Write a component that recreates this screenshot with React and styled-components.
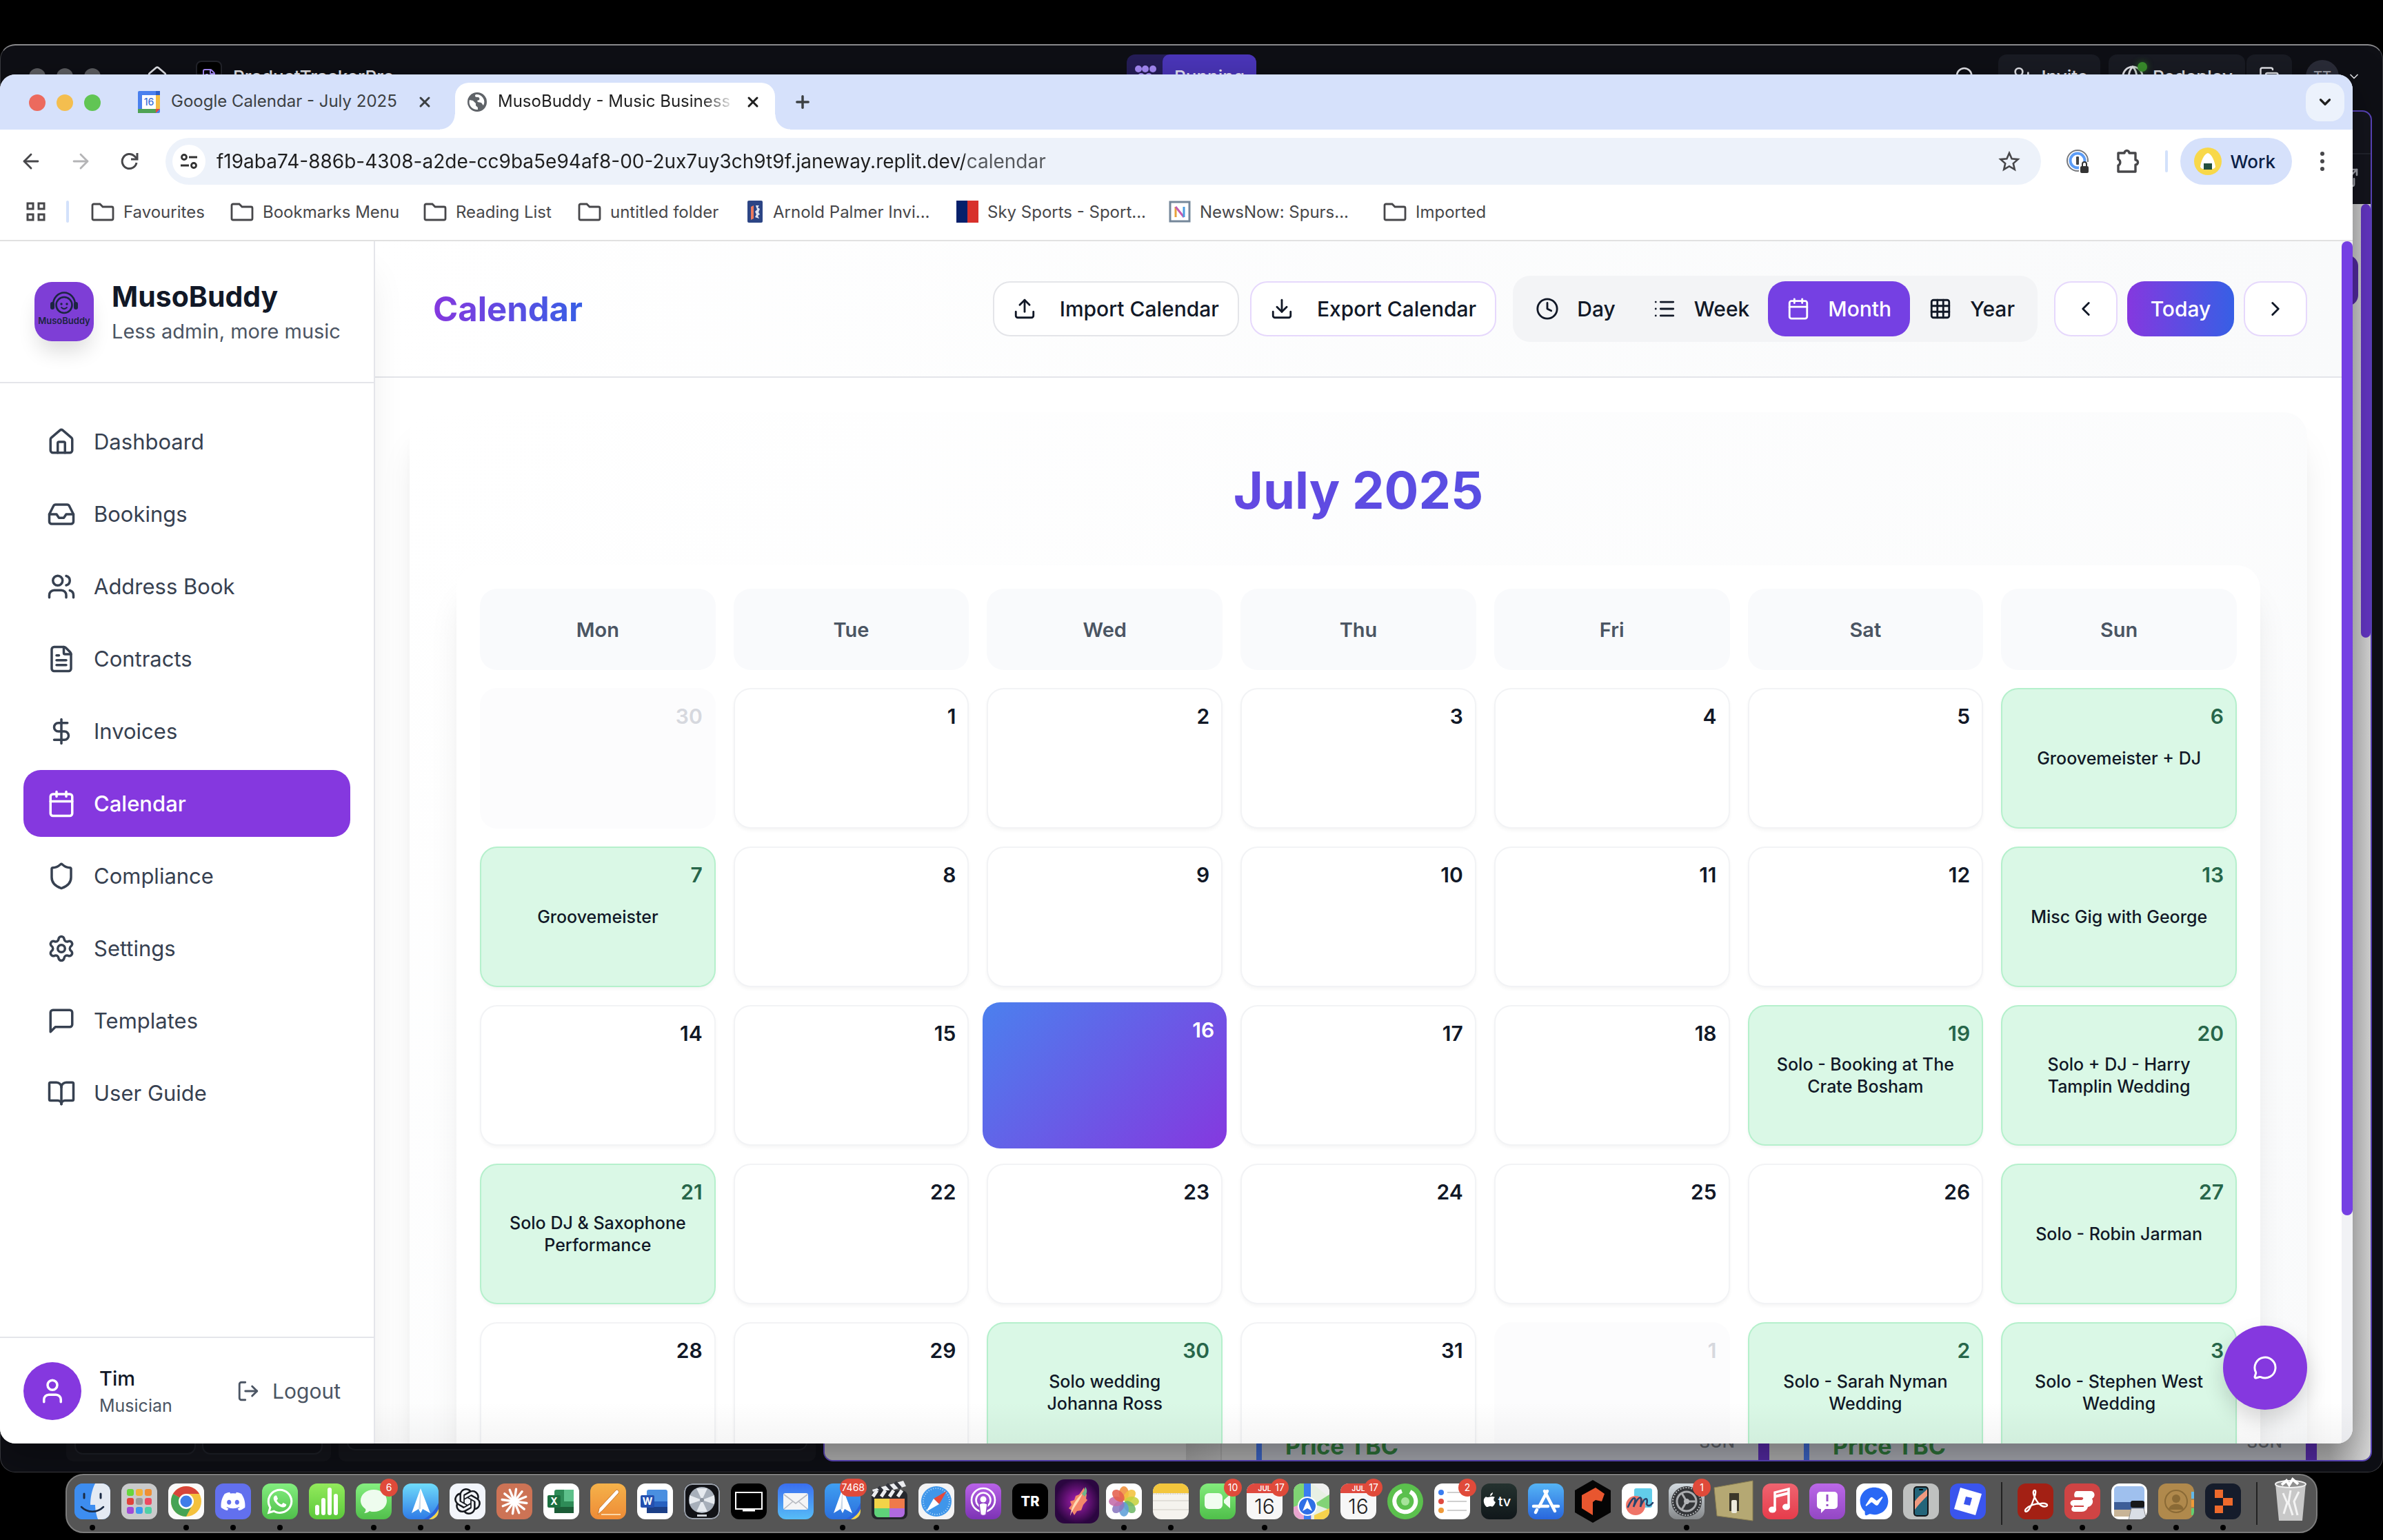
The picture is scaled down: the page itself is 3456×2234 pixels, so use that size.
import React from "react";
import styled, { createGlobalStyle, css } from "styled-components";
import {
  House, Inbox, Users, FileText, DollarSign, Calendar, Shield, Settings, BookOpen,
  Upload, Download, Clock, List, Grid3x3, ChevronLeft, ChevronRight, ChevronDown,
  User, LogOut, X, Plus, ArrowLeft, ArrowRight, Search, UserPlus, Globe, MessageCircle,
  ExternalLink, Copy,
} from "lucide-react";
import { FaDiscord, FaWhatsapp, FaFacebookMessenger } from "react-icons/fa";
import { SiOpenai } from "react-icons/si";

const violet = "#8538df";
const indigo = "#7540e3";

const GlobalStyle = createGlobalStyle`
  * { box-sizing: border-box; }
  body { margin: 0; background: #000; font-family: Inter, "Liberation Sans", sans-serif; color: #111827; }
  button, input { font: inherit; color: inherit; }
  button { border: 0; background: none; padding: 0; }
  a { color: inherit; text-decoration: none; }
  svg { display: block; flex: none; }
`;

const Desktop = styled.div`
  position: relative;
  min-height: 100vh;
  overflow: hidden;
`;

/* ---------- editor window behind the browser ---------- */

const EditorWindow = styled.div`
  position: absolute;
  inset: 64px 0 98px 0;
  display: flex;
  flex-direction: column;
  background: #0e0f15;
  border: 1px solid #3a3b40;
  border-top: 2px solid #8a8a8d;
  border-radius: 22px;
  overflow: hidden;
`;
const EditorBar = styled.div`
  height: 94px;
  display: grid;
  grid-template-columns: 1fr auto 1fr;
  align-items: center;
  padding: 0 31px 4px;
  color: #e4e5ea;
  font-size: 26px;
  font-weight: 500;
`;
const BarGroup = styled.div`
  display: flex;
  align-items: center;
  gap: 16px;
  padding-left: 10px;
`;
const BarActions = styled.div`
  display: flex;
  align-items: center;
  justify-content: flex-end;
  gap: 12px;
`;
const Light = styled.span`
  width: 24px;
  height: 24px;
  border-radius: 50%;
  background: ${(p) => p.$color};
`;
const AppGlyph = styled.span`
  display: grid;
  place-items: center;
  width: 38px;
  height: 46px;
  border-radius: 8px;
  background: #000;
  border: 2px solid #23242c;
  color: #a78bfa;
`;
const HomeSlot = styled.span`
  padding: 0 24px 0 50px;
`;
const RunPill = styled.button`
  display: flex;
  align-items: center;
  height: 64px;
  border-radius: 12px;
  overflow: hidden;
  background: #251d58;
  color: #a78bfa;
  gap: 8px;
  padding-left: 12px;
  span { display: grid; place-items: center; height: 64px; width: 136px; border-radius: 10px 0 0 10px; background: #4b36bb; color: #e8e6f7; }
`;
const BarButton = styled.button`
  display: flex;
  align-items: center;
  gap: 12px;
  height: 64px;
  padding: 0 18px;
  border-radius: 12px;
  background: #191b23;
`;
const SplitButton = styled.div`
  display: flex;
  gap: 2px;
  margin-right: 8px;
`;
const LiveGlobe = styled.span`
  position: relative;
  &::after {
    content: "";
    position: absolute;
    top: -4px;
    right: -4px;
    width: 14px;
    height: 14px;
    border-radius: 50%;
    background: #3a8f2c;
    box-shadow: 0 0 10px #2f6d26;
  }
`;
const SearchSlot = styled.span`
  padding-right: 20px;
`;
const RoundAvatar = styled.span`
  display: grid;
  place-items: center;
  width: 48px;
  height: 48px;
  border-radius: 50%;
  background: #2a2c38;
  font-size: 20px;
  color: #9a9ca6;
`;
const EditorBody = styled.div`
  flex: 1;
  min-height: 0;
  display: flex;
  align-items: flex-end;
  gap: 11px;
  padding: 0 15px 15px 95px;
`;
const ToolPanel = styled.div`
  display: flex;
  flex: none;
  gap: 9px;
  width: ${(p) => p.$width}px;
  height: 300px;
  padding: 12px 12px ${(p) => p.$pad}px;
  border-radius: 10px;
  background: #14151b;
`;
const ToolSlot = styled.div`
  flex: 1;
  border: 2px solid #1e2027;
  border-radius: 12px;
  background: #0f1016;
`;
const WebPane = styled.div`
  flex: 1;
  align-self: stretch;
  display: flex;
  flex-direction: column;
  border: 2px solid #5b45bd;
  border-radius: 14px;
  overflow: hidden;
  background: #14151d;
`;
const WebTabs = styled.div`
  height: 62px;
  border-bottom: 2px solid #22242d;
`;
const WebBar = styled.div`
  display: flex;
  flex-direction: column;
  align-items: flex-end;
  height: 72px;
  padding: 18px 16px 0;
  gap: 4px;
  color: #a3a5ad;
`;
const WebPage = styled.div`
  flex: 1;
  min-height: 0;
  display: flex;
  background: linear-gradient(90deg, #adadad calc(100% - 60px), #dadada);
`;
const WebThumb = styled.div`
  width: 14px;
  height: 629px;
  border-radius: 8px;
  background: #6537c6;
`;
const WebCards = styled.div`
  position: relative;
  flex: 1;
  display: flex;
  align-items: flex-end;
  overflow: hidden;
`;
const WebAction = styled.span`
  position: absolute;
  right: 4px;
  top: 74px;
  width: 90px;
  height: 74px;
  border-radius: 16px;
  background: #52299f;
`;
const WebGap = styled.div`
  flex: none;
  width: 576px;
  height: 60px;
  border-right: 2px solid #9c9c9c;
  background: linear-gradient(90deg, #b0b0b0 524px, #9d9d9d 524px, #a9a9a9);
`;
const WebCard = styled.div`
  flex: none;
  display: flex;
  align-items: flex-start;
  width: 744px;
  height: 60px;
  margin-left: 50px;
  border-left: 8px solid #3a62c0;
  border-right: 16px solid #52299f;
  background: #a4a6ad;
  padding: 20px 34px 0;
  color: #2d7038;
`;
const WebPrice = styled.span`
  font-size: 34px;
  line-height: 40px;
  font-weight: 700;
`;
const WebWeekday = styled.span`
  margin-left: auto;
  color: #5c5f66;
  font-size: 24px;
  font-weight: 500;
  line-height: 28px;
`;

/* ---------- browser window ---------- */

const BrowserWindow = styled.div`
  position: absolute;
  inset: 108px 44px 140px 0;
  display: flex;
  flex-direction: column;
  background: #fff;
  border-radius: 22px;
  overflow: hidden;
  box-shadow: 0 16px 60px rgba(0, 0, 0, 0.35);
`;
const TabStrip = styled.div`
  display: flex;
  flex: none;
  height: 80px;
  padding: 12px 12px 0 42px;
  background: #d6e1fb;
  color: #3c4043;
  font-size: 24px;
`;
const Lights = styled.div`
  display: flex;
  gap: 16px;
  padding: 17px 36px 0 0;
`;
const Tab = styled.div`
  position: relative;
  display: flex;
  align-items: flex-start;
  width: 478px;
  padding: 12px 30px 0 18px;
  height: 68px;
  line-height: 30px;
  border-radius: 20px 20px 0 0;
  ${(p) => p.$active && css`
    width: 464px;
    padding: 12px 18px 0;
    background: #fff;
    color: #1f1f1f;
    &::before, &::after {
      content: "";
      position: absolute;
      bottom: 0;
      width: 22px;
      height: 22px;
    }
    &::before { left: -22px; background: radial-gradient(circle at 0 0, transparent 21px, #fff 22px); }
    &::after { right: -22px; background: radial-gradient(circle at 100% 0, transparent 21px, #fff 22px); }
  `}
`;
const TabText = styled.span`
  flex: 1;
  min-width: 0;
  margin: 0 12px 0 16px;
  white-space: nowrap;
  overflow: hidden;
  ${(p) => p.$fade && "mask-image: linear-gradient(90deg, #000 86%, transparent);"}
`;
const TabClose = styled.button`
  display: grid;
  place-items: center;
  width: 28px;
  height: 32px;
`;
const NewTab = styled.button`
  width: 80px;
  height: 60px;
  display: grid;
  place-items: center;
  align-items: start;
  padding-top: 14px;
`;
const TabSearch = styled.button`
  display: grid;
  place-items: center;
  width: 56px;
  height: 56px;
  margin-left: auto;
  border-radius: 20px;
  background: #ecf2fc;
  color: #1f1f1f;
`;
const Toolbar = styled.div`
  display: flex;
  flex: none;
  align-items: center;
  height: 92px;
  padding: 0 40px 0 28px;
  color: #47474a;
`;
const NavButton = styled.button`
  display: grid;
  place-items: center;
  width: 32px;
  margin-right: 40px;
  opacity: ${(p) => (p.$off ? 0.4 : 1)};
`;
const Omnibox = styled.label`
  flex: 1;
  display: flex;
  align-items: center;
  height: 68px;
  margin-left: -4px;
  padding: 0 30px 0 10px;
  border-radius: 34px;
  background: #edf2fa;
`;
const SiteInfo = styled.span`
  display: grid;
  place-items: center;
  width: 48px;
  height: 48px;
  margin-right: 16px;
  border-radius: 50%;
  background: #fff;
`;
const Address = styled.input`
  flex: 1;
  border: 0;
  padding: 0;
  outline: 0;
  font-size: 28px;
  color: transparent;
  background: linear-gradient(90deg, #1f1f1f 1085px, #55585c 1085px);
  -webkit-background-clip: text;
  background-clip: text;
`;
const Extensions = styled.div`
  display: flex;
  align-items: center;
  gap: 36px;
  padding-left: 36px;
`;
const Rule = styled.span`
  width: 4px;
  height: 32px;
  border-radius: 2px;
  background: #d3e1fb;
`;
const Profile = styled.button`
  display: flex;
  align-items: center;
  gap: 13px;
  height: 68px;
  margin: 0 4px 0 -18px;
  padding: 0 24px 0 20px;
  border-radius: 34px;
  background: #d6e1fb;
  color: #0b1e46;
  font-size: 26px;
  font-weight: 500;
`;
const Bookmarks = styled.nav`
  display: flex;
  flex: none;
  align-items: center;
  height: 70px;
  padding: 0 38px 14px;
  border-bottom: 2px solid #e1e1e1;
  color: #47474a;
  font-size: 24px;
`;
const Bookmark = styled.a`
  display: flex;
  align-items: center;
  gap: 13px;
  width: ${(p) => p.$width}px;
  white-space: nowrap;
`;
const AppsButton = styled.button`
  margin-right: 30px;
`;
const BookmarkRule = styled(Rule)`
  margin-right: 32px;
`;

/* ---------- page ---------- */

const Page = styled.div`
  flex: 1;
  min-height: 0;
  display: flex;
  position: relative;
  &::after {
    content: "";
    position: absolute;
    inset: auto 0 0 0;
    height: 60px;
    background: linear-gradient(transparent, rgba(0, 0, 0, 0.04));
    pointer-events: none;
  }
`;
const Sidebar = styled.aside`
  position: relative;
  z-index: 1;
  flex: none;
  display: flex;
  flex-direction: column;
  width: 544px;
  background: #fff;
  border-right: 2px solid #e4e5ea;
  box-shadow: 0 40px 52px -10px rgba(0, 0, 0, 0.09);
`;
const Brand = styled.div`
  display: flex;
  align-items: center;
  gap: 26px;
  height: 206px;
  padding: 0 50px;
  border-bottom: 2px solid #e4e5ea;
`;
const BrandMark = styled.div`
  border-radius: 25px;
  box-shadow: 0 20px 30px -6px rgba(0, 0, 0, 0.14);
`;
const BrandText = styled.div`
  padding-top: 4px;
`;
const BrandName = styled.div`
  font-size: 41px;
  line-height: 54px;
  font-weight: 700;
`;
const BrandTag = styled.div`
  font-size: 29px;
  line-height: 48px;
  color: #4b5563;
  white-space: nowrap;
`;
const Menu = styled.nav`
  flex: 1;
  display: flex;
  flex-direction: column;
  gap: 8px;
  padding: 36px 34px;
`;
const MenuItem = styled.a`
  display: flex;
  align-items: center;
  gap: 26px;
  height: 97px;
  padding: 0 34px;
  border-radius: 25px;
  font-size: 31px;
  font-weight: ${(p) => (p.$active ? 500 : 400)};
  color: ${(p) => (p.$active ? "#fff" : "#374151")};
  background: ${(p) => (p.$active ? violet : "transparent")};
`;
const Account = styled.div`
  display: flex;
  align-items: center;
  height: 155px;
  padding: 0 48px 0 34px;
  border-top: 2px solid #e4e5ea;
`;
const Avatar = styled.div`
  display: grid;
  place-items: center;
  width: 84px;
  height: 84px;
  margin-right: 26px;
  border-radius: 50%;
  background: ${violet};
  color: #fff;
`;
const AccountName = styled.div`
  font-size: 29px;
  line-height: 42px;
  font-weight: 500;
`;
const AccountRole = styled.div`
  font-size: 25px;
  line-height: 36px;
  color: #4b5563;
`;
const Logout = styled.button`
  display: flex;
  align-items: center;
  gap: 18px;
  margin-left: auto;
  font-size: 30px;
  color: #4b5563;
`;
const Main = styled.main`
  flex: 1;
  min-width: 0;
  overflow: hidden;
  background: #fff;
`;
const PageHeader = styled.header`
  display: flex;
  align-items: center;
  justify-content: space-between;
  height: 198px;
  padding: 0 50px 0 84px;
  border-bottom: 2px solid #e4e5ea;
  background: linear-gradient(90deg, #fff, #f9fafb);
`;
const PageTitle = styled.h1`
  margin: 0;
  font-size: 49px;
  font-weight: 700;
  color: transparent;
  background: linear-gradient(90deg, ${violet}, #375fe5);
  -webkit-background-clip: text;
  background-clip: text;
`;
const Actions = styled.div`
  display: flex;
  align-items: center;
  gap: ${(p) => p.$gap}px;
  font-size: 30px;
  font-weight: 500;
`;
const Outline = styled.button`
  display: flex;
  align-items: center;
  justify-content: center;
  gap: 34px;
  height: 80px;
  min-width: 91px;
  padding: 0 27px;
  border: 2px solid ${(p) => (p.$tint ? "#e6d8fc" : "#e4e5e9")};
  border-radius: 25px;
  background: #fff;
`;
const Switcher = styled.div`
  display: flex;
  padding: 8px 6px;
  border-radius: 25px;
  background: #f3f4f6;
`;
const View = styled.button`
  display: flex;
  align-items: center;
  gap: 26px;
  height: 80px;
  padding: 0 27px;
  border-radius: 25px;
  ${(p) => p.$active && css`
    color: #fff;
    background: ${indigo};
  `}
`;
const Today = styled.button`
  height: 80px;
  width: 155px;
  border-radius: 25px;
  color: #fff;
  background: linear-gradient(90deg, ${violet}, #375fe5);
`;
const Card = styled.section`
  margin: 50px 50px 0;
  padding: 68px 68px;
  border-radius: 34px;
  background: linear-gradient(135deg, #fff, #f9fafb);
  box-shadow: 0 42px 52px -10px rgba(0, 0, 0, 0.1), 0 17px 21px -13px rgba(0, 0, 0, 0.08);
`;
const MonthTitle = styled.h2`
  margin: 0 0 64px;
  text-align: center;
  font-size: 74px;
  line-height: 90px;
  font-weight: 700;
  color: transparent;
  background: linear-gradient(90deg, ${violet}, #375fe5);
  -webkit-background-clip: text;
  background-clip: text;
`;
const Sheet = styled.div`
  padding: 8px;
  border-radius: 34px;
  background: #fff;
  box-shadow: 0 42px 52px -10px rgba(0, 0, 0, 0.09), 0 17px 21px -13px rgba(0, 0, 0, 0.06);
`;
const Month = styled.table`
  width: 100%;
  table-layout: fixed;
  border-collapse: separate;
  border-spacing: 26px;
  td, th { padding: 0; }
`;
const Weekday = styled.div`
  display: grid;
  place-items: center;
  height: 118px;
  border-radius: 25px;
  background: #f9fafc;
  color: #4b5563;
  font-size: 29px;
  font-weight: 600;
`;
const tones = {
  plain: css`
    border: 2px solid #f2f3f5;
    background: #fff;
    box-shadow: 0 3px 5px rgba(0, 0, 0, 0.04);
  `,
  outside: css`
    background: #fcfcfd;
    color: #d6d8de;
    border: 2px solid #fcfcfd;
  `,
  booked: css`
    background: #daf8e6;
    border: 2px solid #b5f0cc;
    color: #27664a;
    box-shadow: 0 3px 5px rgba(0, 0, 0, 0.04);
  `,
  today: css`
    margin: -4px -6px;
    padding: 19px 18px;
    height: 212px;
    color: #fff;
    background: linear-gradient(135deg, #4b80ee, ${violet});
  `,
};
const Day = styled.div`
  display: grid;
  height: 204px;
  padding: 18px 17px;
  border-radius: 25px;
  ${(p) => tones[p.$tone]}
`;
const DayNumber = styled.span`
  grid-area: 1 / 1;
  justify-self: end;
  font-size: 30px;
  line-height: 42px;
  font-weight: 600;
`;
const Gig = styled.span`
  grid-area: 1 / 1;
  place-self: center;
  max-width: 268px;
  text-align: center;
  font-size: 25px;
  line-height: 32px;
  font-weight: 500;
  color: #111827;
`;
const ScrollTrack = styled.div`
  flex: none;
  width: 16px;
  background: #f1f2f5;
`;
const ScrollThumb = styled.div`
  height: 81%;
  border-radius: 8px;
  background: ${indigo};
`;
const ChatButton = styled.button`
  position: absolute;
  z-index: 2;
  right: 66px;
  bottom: 49px;
  display: grid;
  place-items: center;
  width: 122px;
  height: 122px;
  border-radius: 50%;
  background: ${violet};
  color: #fff;
  box-shadow: 0 14px 30px rgba(0, 0, 0, 0.16);
`;

/* ---------- dock ---------- */

const Dock = styled.div`
  position: absolute;
  left: 50%;
  bottom: 10px;
  transform: translateX(-50%);
  display: flex;
  gap: 16px;
  height: 86px;
  padding: 12px 11px;
  border: 2px solid #7c7c7c;
  border-radius: 26px;
  background: #555;
`;
const DockItem = styled.button`
  position: relative;
  width: 52px;
  height: 52px;
  ${(p) => p.$running && css`
    &::after {
      content: "";
      position: absolute;
      left: 22px;
      bottom: -16px;
      width: 8px;
      height: 8px;
      border-radius: 50%;
      background: #000;
    }
  `}
`;
const Tile = styled.span`
  display: grid;
  place-items: center;
  width: 52px;
  height: 52px;
  border-radius: ${(p) => (p.$bare ? 0 : 12)}px;
  overflow: ${(p) => (p.$bare ? "visible" : "hidden")};
  background: ${(p) => p.$bg};
  color: ${(p) => p.$fg || "#fff"};
`;
const Badge = styled.span`
  position: absolute;
  top: -7px;
  right: -9px;
  min-width: 26px;
  height: 26px;
  padding: 0 3px;
  border-radius: 13px;
  background: #e04a3a;
  color: #fff;
  font-size: 14px;
  line-height: 26px;
  text-align: center;
`;
const DockRule = styled.span`
  width: 14px;
  height: 62px;
  margin-top: -2px;
  background: linear-gradient(#222, #222) center / 2px 100% no-repeat;
`;

/* ---------- drawings ---------- */

const ArtSvg = styled.svg`
  overflow: visible;
`;
const Art = ({ children }) => (
  <ArtSvg width="52" height="52" viewBox="0 0 52 52" fill="none">{children}</ArtSvg>
);

const MessageSquare = ({ size }) => (
  <svg width={size} height={size} viewBox="0 0 24 24" fill="none" stroke="currentColor" strokeWidth="2" strokeLinecap="round" strokeLinejoin="round">
    <path d="M21 15a2 2 0 0 1-2 2H7l-4 4V5a2 2 0 0 1 2-2h14a2 2 0 0 1 2 2z" />
  </svg>
);

const BrandLogo = () => (
  <svg width="86" height="86" viewBox="0 0 86 86" fill="none">
    <rect width="86" height="86" rx="25" fill="#7e3ed6" />
    <g stroke="#1c2541" strokeWidth="2.6">
      <circle cx="43" cy="33.500" r="11.500" />
      <path d="M27 33a16 17.500 0 0 1 32 0" />
    </g>
    <rect x="23" y="29" width="6" height="11" rx="3" fill="#1c2541" />
    <rect x="57" y="29" width="6" height="11" rx="3" fill="#1c2541" />
    <circle cx="39" cy="32" r="1.700" fill="#1c2541" />
    <circle cx="47" cy="32" r="1.700" fill="#1c2541" />
    <path d="M39 37q4 4 8 0" stroke="#1c2541" strokeWidth="1.800" strokeLinecap="round" />
    <text x="43" y="61" textAnchor="middle" fontSize="13" fontWeight="600" fill="#1c2541">MusoBuddy</text>
  </svg>
);

const CalendarFavicon = () => (
  <svg width="32" height="32" viewBox="0 0 32 32">
    <rect width="32" height="32" rx="2" fill="#4a80ee" />
    <rect x="26" y="6" width="6" height="20" fill="#f3bd42" />
    <rect y="26" width="26" height="6" fill="#4fa254" />
    <path d="M26 26h6l-6 6z" fill="#e5493a" />
    <rect x="26" width="6" height="6" fill="#2b5fc9" />
    <rect x="6" y="6" width="20" height="20" fill="#fff" />
    <text x="16" y="21" textAnchor="middle" fontSize="14" fontWeight="500" fill="#3c6fd8">16</text>
  </svg>
);

const WorldFavicon = () => (
  <svg width="28" height="32" viewBox="0 -2 28 32">
    <circle cx="14" cy="14" r="14" fill="#5f6368" />
    <path d="M3 11l5 1 4 4v3l3 3v3a11 11 0 0 1-12-14zM12 3c-2 2-1 4 2 4s4 1 3 4l-3 1 1 2 5 1 3 4a11 11 0 0 0-11-16z" fill="#fff" />
  </svg>
);

const Reload = () => (
  <svg width="32" height="32" viewBox="0 0 32 32" fill="none" stroke="currentColor" strokeWidth="3">
    <path d="M26 18a10.500 10.500 0 1 1-3-9.500l4 4" />
    <path d="M27 4v9h-9" />
  </svg>
);

const Tune = () => (
  <svg width="26" height="26" viewBox="0 0 26 26" fill="none" stroke="#333" strokeWidth="2.800">
    <circle cx="6" cy="7" r="3.500" /><path d="M13 7h12M1 19h12" /><circle cx="20" cy="19" r="3.500" />
  </svg>
);

const Star = () => (
  <svg width="32" height="32" viewBox="0 0 32 32" fill="none" stroke="currentColor" strokeWidth="2.600">
    <path d="M16 4l3.600 8.300 9 .8-6.800 6 2 8.800L16 23.200 8.200 27.900l2-8.800-6.800-6 9-.8z" />
  </svg>
);

const PasswordIcon = () => (
  <svg width="36" height="36" viewBox="0 0 36 36" fill="none">
    <circle cx="17" cy="17" r="15" stroke="#77797d" strokeWidth="2" />
    <circle cx="17" cy="17" r="10.500" stroke="#5b9cf6" strokeWidth="4" />
    <rect x="15" y="11" width="4" height="12" rx="1" fill="#444" />
    <rect x="19" y="19" width="17" height="17" fill="#fff" />
    <rect x="21" y="25" width="12" height="10" rx="2" fill="#333" />
    <path d="M24 25v-3a3 3 0 0 1 6 0v3" stroke="#333" strokeWidth="2" />
  </svg>
);

const Puzzle = () => (
  <svg width="36" height="36" viewBox="0 0 36 36" fill="none" stroke="currentColor" strokeWidth="3.400" strokeLinejoin="round">
    <path d="M4 6h9a3.500 3.500 0 0 1 7 0h9v10a3.500 3.500 0 0 1 0 7v10H4v-9a5 5 0 0 0 0-9z" />
  </svg>
);

const ProfilePicture = () => (
  <svg width="40" height="40" viewBox="0 0 40 40">
    <circle cx="20" cy="20" r="20" fill="#f8d84a" />
    <path d="M20 8c6 2 10 12 11 20a5 5 0 0 1-5 3H14a5 5 0 0 1-5-3c1-8 5-18 11-20z" fill="#fff" />
    <rect x="14" y="23" width="12" height="9" fill="#23503f" />
  </svg>
);

const Dots = () => (
  <svg width="8" height="28" viewBox="0 0 8 28" fill="#47474a">
    <circle cx="4" cy="3" r="3" /><circle cx="4" cy="14" r="3" /><circle cx="4" cy="25" r="3" />
  </svg>
);

const Apps = () => (
  <svg width="28" height="28" viewBox="0 0 28 28" fill="none" stroke="currentColor" strokeWidth="3">
    <rect x="2" y="2" width="8" height="8" /><rect x="18" y="2" width="8" height="8" />
    <rect x="2" y="18" width="8" height="8" /><rect x="18" y="18" width="8" height="8" />
  </svg>
);

const FolderIcon = () => (
  <svg width="34" height="34" viewBox="0 0 34 34" fill="none" stroke="currentColor" strokeWidth="2.800">
    <path d="M2 8a2 2 0 0 1 2-2h9l4 4h13a2 2 0 0 1 2 2v15a2 2 0 0 1-2 2H4a2 2 0 0 1-2-2z" />
  </svg>
);

const GolfIcon = () => (
  <svg width="24" height="32" viewBox="0 0 24 32">
    <rect width="22" height="32" rx="2" fill="#2c4585" />
    <path d="M5 9l4-2v19l-4 2z" fill="#ec7b5d" />
    <path d="M12 7h5l-2 3 3 2-2 5 2 3-3 2 2 4-6-2 2-4-2-4 3-3z" fill="#dfe5f2" />
  </svg>
);

const SkyIcon = () => (
  <svg width="32" height="32" viewBox="0 0 32 32">
    <rect width="16" height="32" fill="#06206b" /><rect x="16" width="16" height="32" fill="#d8302b" />
  </svg>
);

const NewsIcon = () => (
  <svg width="32" height="32" viewBox="0 0 32 32" fill="none">
    <rect x="2" y="2" width="28" height="28" fill="#fff" stroke="#75879a" strokeWidth="3" />
    <path d="M10 24V9" stroke="#e8a13a" strokeWidth="3" />
    <path d="M10 9l12 15" stroke="#c45bb0" strokeWidth="3" />
    <path d="M22 24V9" stroke="#4a9de0" strokeWidth="3" />
  </svg>
);

const rays = Array.from({ length: 12 }, (_, i) => i * 30);
const petals = ["#f0903a", "#f2c13e", "#c5d23f", "#6fb86a", "#5f9fd8", "#8a78c0", "#c46ba8", "#e5604c"];
const padColors = ["#67d63c", "#f2b13a", "#ef8f35", "#e0413a", "#9a9a9a", "#ec4b62", "#a04ad8", "#3b9af0", "#4fd0a5"];

const art = {
  finder: <Art><path d="M0 0h30c-5 9-7 18-7 27h7c0 9 1 17 4 25H0z" fill="#3d8df0" /><path d="M30 0h22v52H34c-3-8-4-16-4-21h-7c0-9 2-22 7-31z" fill="#e4eaf3" /><path d="M14 15v6M38 15v6" stroke="#1b2b44" strokeWidth="3" strokeLinecap="round" /><path d="M10 34c9 9 23 9 32 0" stroke="#1b2b44" strokeWidth="2.500" strokeLinecap="round" /></Art>,
  launchpad: <Art>{padColors.map((c, i) => <rect key={c} x={8 + (i % 3) * 13} y={8 + Math.floor(i / 3) * 13} width="10" height="10" rx="3" fill={c} />)}</Art>,
  chrome: <Art><circle cx="26" cy="26" r="22" fill="#f4c13d" /><path d="M26 26L7 15a22 22 0 0 1 38 0H26z" fill="#d8453a" /><path d="M7 15a22 22 0 0 0 19 33l9-17-9-5z" fill="#46a354" /><circle cx="26" cy="26" r="11" fill="#fff" /><circle cx="26" cy="26" r="8.500" fill="#3f7de8" /></Art>,
  discord: <FaDiscord size={38} />,
  whatsapp: <FaWhatsapp size={42} />,
  numbers: <Art><path d="M12 43V34M21 43V24M30 43V9M39 43V18" stroke="#fff" strokeWidth="6" strokeLinecap="round" /></Art>,
  messages: <Art><path d="M26 9c11 0 19 7 19 16s-8 16-19 16c-2 0-4 0-6-1-2 2-5 3-8 3 2-2 3-4 2-6-4-3-7-7-7-12C7 16 15 9 26 9z" fill="#eefcee" /></Art>,
  airmail: <Art><path d="M26 7l14 36-11-6-3 6-3-6-10 6z" fill="#fff" /><path d="M26 7v30l-3 1z" fill="#c9d8e8" /><path d="M52 28c-4 10-12 19-22 24h8l14-12z" fill="#2c62d8" /><path d="M52 37c-3 7-8 11-14 15h14z" fill="#f6d548" /></Art>,
  openai: <SiOpenai size={38} />,
  claude: <Art>{rays.map((r) => <path key={r} d="M26 24V8" stroke="#fff" strokeWidth="3.400" strokeLinecap="round" transform={`rotate(${r + 8} 26 26)`} />)}</Art>,
  excel: <Art><rect x="16" y="9" width="28" height="34" rx="3" fill="#2e8b57" /><rect x="30" y="9" width="14" height="17" fill="#5dc08a" /><rect x="16" y="34" width="28" height="9" fill="#1c5c37" /><rect x="6" y="17" width="19" height="18" rx="2" fill="#1b6f3f" /><text x="15.500" y="31" fontSize="14" fontWeight="700" textAnchor="middle" fill="#fff">X</text></Art>,
  pages: <Art><path d="M38 9c3 0 4 3 3 5L18 39l-7 6 2-9z" fill="#fff" stroke="#c9782c" strokeWidth="1" /><path d="M16 45h28" stroke="#fbd7a8" strokeWidth="2" /></Art>,
  word: <Art><rect x="14" y="9" width="30" height="34" rx="3" fill="#4a8fe0" /><rect x="14" y="26" width="30" height="9" fill="#2861c0" /><rect x="14" y="34" width="30" height="9" fill="#1c3f87" /><rect x="5" y="17" width="20" height="18" rx="2" fill="#2450b0" /><text x="15" y="31" fontSize="14" fontWeight="700" textAnchor="middle" fill="#fff">W</text></Art>,
  logic: <Art><rect x="1" y="1" width="50" height="50" rx="11" stroke="#9aa0aa" strokeWidth="2" /><circle cx="26" cy="24" r="19" fill="#a7afba" /><path d="M26 24L18 7h16zM26 24l-8 17h16zM26 24L8 17v13zM26 24l18-7v13z" fill="#e6eaef" /><circle cx="26" cy="24" r="3" fill="#8a929d" /><rect x="19" y="45" width="14" height="3" fill="#cfd3d9" /></Art>,
  screen: <Art><rect x="7" y="13" width="38" height="24" stroke="#fff" strokeWidth="2" /><path d="M17 39h18" stroke="#fff" strokeWidth="3" /></Art>,
  mail: <Art><rect x="8" y="14" width="36" height="24" rx="3" fill="#f4f5f6" /><path d="M9 16l17 13 17-13M9 37l13-11M43 37L30 26" stroke="#b9bcc2" strokeWidth="1.600" /></Art>,
  finalcut: <Art><path d="M1 9L46-4l4 8L4 17z" fill="#ecedf0" /><path d="M10 5l8 9M22 1l8 9M34-2l8 9" stroke="#34363d" strokeWidth="5" /><rect x="0" y="10" width="52" height="42" rx="8" fill="#24262c" /><path d="M8 10l-6 9M20 10l-6 9M32 10l-6 9M44 10l-6 9" stroke="#ecedf0" strokeWidth="5" /><path d="M4 22h22v14H4z" fill="#f2d348" /><path d="M26 22h22v14H26z" fill="#ef7a4a" /><path d="M4 36h22v13H10a6 6 0 0 1-6-6z" fill="#5fd27a" /><path d="M26 36h22v7a6 6 0 0 1-6 6H26z" fill="#b06ae0" /></Art>,
  safari: <Art><circle cx="26" cy="26" r="22" fill="#3f96ea" /><circle cx="26" cy="26" r="19" stroke="#bfe0fa" strokeWidth="2" strokeDasharray="1 2.500" /><path d="M41 11L30 30l-8-8z" fill="#e5493a" /><path d="M11 41l19-11-8-8z" fill="#fff" /></Art>,
  podcasts: <Art><circle cx="26" cy="24" r="17" stroke="#fff" strokeWidth="2.600" /><circle cx="26" cy="24" r="10.500" stroke="#fff" strokeWidth="2.600" /><path d="M20 30q6-4 12 0l-2 15q-4 3-8 0z" fill="#fff" stroke="#8f3fc4" strokeWidth="1.500" /><circle cx="26" cy="23" r="4.500" fill="#fff" /></Art>,
  tr: <Art><text x="26" y="33" fontSize="20" fontWeight="800" textAnchor="middle" fill="#fff">TR</text></Art>,
  feather: <Art><defs><radialGradient id="plum"><stop offset="0" stopColor="#a81fb4" /><stop offset="1" stopColor="#2b0640" /></radialGradient></defs><rect x="-6" y="-6" width="64" height="64" rx="14" fill="url(#plum)" /><path d="M36 6l2 8 2 2-1 6 2 2-6 7-3 8-6 1-4 6-4-7-4-3 4-5-2-5 6-2 2-6 5-2z" fill="#f4876a" /><path d="M34 14c-4 12-12 18-18 33 2-10 4-20 18-33z" fill="#ffd9b0" /><path d="M38 5c4 5 2 10-1 14l-4-4c3-3 4-6 5-10z" fill="#6fb58a" /></Art>,
  photos: <Art>{petals.map((c, i) => <ellipse key={c} cx="26" cy="14.500" rx="7" ry="10.500" fill={c} opacity="0.88" transform={`rotate(${i * 45} 26 26)`} />)}</Art>,
  notes: <Art><path d="M0 0h52v14H0z" fill="#f3c63c" /><path d="M0 15h52" stroke="#b9b6ac" strokeWidth="1.500" strokeDasharray="1 1.500" /><path d="M0 25h52M0 38h52" stroke="#cfccc4" strokeWidth="1.200" /></Art>,
  facetime: <Art><rect x="7" y="14" width="26" height="23" rx="6" fill="#f1fdf0" /><path d="M35 24l9-8v20l-9-8z" fill="#f1fdf0" /></Art>,
  calendar: <Art><path d="M0 0h52v14H0z" fill="#df4a3f" /><text x="26" y="11" fontSize="10" fontWeight="600" textAnchor="middle" fill="#fff">JUL</text><text x="26" y="44" fontSize="30" fontWeight="300" textAnchor="middle" fill="#222">16</text></Art>,
  maps: <Art><path d="M0 0h16v52H0z" fill="#7fd473" /><path d="M0 34l26-10v28H0z" fill="#e9a5cf" /><path d="M27 0h25v20z" fill="#f0f0f0" /><path d="M30 30l22-14v22z" fill="#83d377" /><path d="M30 46l22-10v16H30z" fill="#f6d24c" /><path d="M15 0h10v52H15z" fill="#3a7df0" /><circle cx="20" cy="33" r="13" fill="#2f6fe6" stroke="#fff" strokeWidth="2" /><path d="M20 23l7 17-7-4-7 4z" fill="#fff" /></Art>,
  ring: <Art><circle cx="26" cy="26" r="26" fill="#5bc04d" /><path d="M33 12a15.500 15.500 0 1 1-12-1" stroke="#fff" strokeWidth="6" /><circle cx="26" cy="26" r="6" fill="#a7e39b" /></Art>,
  reminders: <Art><circle cx="10" cy="13" r="4" fill="#3a7df0" /><circle cx="10" cy="26" r="4" fill="#df4a3f" /><circle cx="10" cy="39" r="4" fill="#ef9a38" /><path d="M19 13h28M19 26h28M19 39h28" stroke="#cfcfcf" strokeWidth="1.800" /></Art>,
  tv: <Art><path d="M15 19c-2 0-3 1-5 1s-3-1-4 0c-3 2-3 8 0 12 3 4 4 1 7 1s3 2 6-2l2-4c-4-2-3-6-1-7-1-1-3-1-5-1zM13 18c0-3 2-4 4-5 0 3-2 5-4 5z" fill="#fff" /><text x="34" y="33" fontSize="20" fontWeight="500" textAnchor="middle" fill="#fff">tv</text></Art>,
  appstore: <Art><path d="M28 11L16 34M24 11l15 29M8 33h21M37 33h7M13 38l-2 4" stroke="#fff" strokeWidth="4.500" strokeLinecap="round" /></Art>,
  hex: <Art><path d="M26-5l26 15v32L26 57 0 42V10z" fill="#050505" /><path d="M10 17L30 6l13 9-4 11-9-2-4 3v19L10 36z" fill="#e8562f" /></Art>,
  freeform: <Art><rect x="18" y="7" width="26" height="28" rx="3" fill="#62cdea" /><circle cx="20" cy="32" r="14" fill="#ef7468" /><path d="M9 34c8-18 14-16 8 0 8-18 14-18 10 0 6-16 12-14 9-4 2 4 6 2 9-2" stroke="#26456e" strokeWidth="2.600" strokeLinecap="round" /></Art>,
  settings: <Art><circle cx="26" cy="26" r="22" fill="#333538" /><circle cx="26" cy="26" r="20" stroke="#b3b5b8" strokeWidth="2" strokeDasharray="2 2" /><circle cx="26" cy="26" r="14" stroke="#a9abae" strokeWidth="3" /><path d="M26 26L19 14M26 26h14M26 26l-7 12" stroke="#a9abae" strokeWidth="3" /><circle cx="26" cy="26" r="4" fill="#b3b5b8" /></Art>,
  toggle: <Art><path d="M-2 6L54-4v58L2 47z" fill="#b5a873" stroke="#8c8053" strokeWidth="1" /><rect x="20" y="14" width="14" height="26" fill="#3c382a" /><rect x="23" y="24" width="8" height="19" rx="2" fill="#ece9dc" /></Art>,
  music: <Art><path d="M18 38V13l20-5v25" stroke="#fff" strokeWidth="3.500" /><path d="M18 19l20-5" stroke="#fff" strokeWidth="4" /><ellipse cx="14.500" cy="38" rx="5.500" ry="4.500" fill="#fff" /><ellipse cx="34.500" cy="34" rx="5.500" ry="4.500" fill="#fff" /></Art>,
  feedback: <Art><path d="M16 12h20a5 5 0 0 1 5 5v15a5 5 0 0 1-5 5H23l-6 6v-6h-1a5 5 0 0 1-5-5V17a5 5 0 0 1 5-5z" fill="#fff" /><path d="M26 16v10M26 30v3" stroke="#9a4fc9" strokeWidth="3" /></Art>,
  messenger: <FaFacebookMessenger size={42} />,
  phone: <Art><rect x="15" y="4" width="22" height="44" rx="5" fill="#121417" /><rect x="17" y="6" width="18" height="40" rx="3" fill="#24657a" /><path d="M17 26C22 18 30 14 35 8v10c-6 6-12 12-18 20z" fill="#ef9a80" /><rect x="23" y="8" width="6" height="2" rx="1" fill="#000" /></Art>,
  roblox: <Art><path d="M15 6l31 9-9 31-31-9z" fill="#fff" /><path d="M23 19l9 2-3 11-9-2z" fill="#3a55ee" /></Art>,
  acrobat: <Art><path d="M25 10c-4 0-2 8 2 14 4 7 10 11 15 9 3-2-1-5-8-4-8 0-17 3-22 8-3 4 1 6 5 0 5-8 12-27 8-27z" stroke="#fff" strokeWidth="2.400" /></Art>,
  express: <Art><path d="M18 11h20c6 0 8 8 2 11 3 5 0 11-6 12-1 4-4 7-9 7H15c-6 0-6-6-2-8-6-1-6-8 0-9h12c3-1 3-4 0-4H15c-2-4 0-9 3-9z" fill="#fff" /><path d="M14 33h14" stroke="#cf4444" strokeWidth="2" /></Art>,
  preview: <Art><rect x="4" y="4" width="44" height="44" rx="5" fill="#9fc0ee" /><path d="M4 27h44v16H4z" fill="#3d5d97" /><path d="M4 38h44v10H4z" fill="#c8b497" /><rect x="28" y="25" width="20" height="10" rx="3" fill="#17181a" /><path d="M29 36h18l4 17H25z" fill="#d9dee6" stroke="#888" strokeWidth="1" /></Art>,
  contacts: <Art><circle cx="26" cy="26" r="16" stroke="#8a6a36" strokeWidth="2" /><circle cx="26" cy="22" r="6" fill="#8a6a36" /><path d="M15 38c1-11 21-11 22 0z" fill="#8a6a36" /><path d="M50 12v10" stroke="#62b8e8" strokeWidth="4" /><path d="M50 24v10" stroke="#ef9a38" strokeWidth="4" /><path d="M50 36v10" stroke="#62d070" strokeWidth="4" /></Art>,
  replit: <Art><path d="M14 9h12v12H14zM26 21h14v11H26zM14 32h12v11H14z" fill="#ee6a2c" /></Art>,
  trash: <Art><path d="M4 0l5 54h34l5-54z" fill="#d3d3d3" opacity="0.92" /><ellipse cx="26" cy="1" rx="22" ry="5" fill="#8f8f8f" stroke="#f1f1f1" strokeWidth="2" /><path d="M13 2l7-6 4 6 5-8 8 7" stroke="#fff" strokeWidth="4" /><path d="M15 14l6 14-5 16M26 10l-3 18 6 18M38 12l-7 14 5 20" stroke="#f4f4f4" strokeWidth="3" /></Art>,
};

const dockApps = [
  { id: "finder", name: "Finder", bg: "#3d8df0", running: true },
  { id: "launchpad", name: "Launchpad", bg: "#c9cacb" },
  { id: "chrome", name: "Chrome", bg: "#fafafa", running: true },
  { id: "discord", name: "Discord", bg: "#6270ee", running: true },
  { id: "whatsapp", name: "WhatsApp", bg: "linear-gradient(#83ee7f, #4fbf4a)", running: true },
  { id: "numbers", name: "Numbers", bg: "linear-gradient(#93ea5c, #5bc83b)" },
  { id: "messages", name: "Messages", bg: "linear-gradient(#85ef80, #51bf4b)", running: true, badge: "6" },
  { id: "airmail", name: "Airmail", bg: "linear-gradient(#6fdcfb, #2f7be6)", running: true },
  { id: "openai", name: "ChatGPT", bg: "#f2f5fb", fg: "#16191f", running: true },
  { id: "claude", name: "Claude", bg: "#cd7355" },
  { id: "excel", name: "Excel", bg: "#fff" },
  { id: "pages", name: "Pages", bg: "linear-gradient(#f5b24a, #ee8b36)" },
  { id: "word", name: "Word", bg: "#fff" },
  { id: "logic", name: "Logic Pro", bg: "#111216" },
  { id: "screen", name: "Screens", bg: "#000" },
  { id: "mail", name: "Mail", bg: "linear-gradient(#3a6ff0, #57bdf7)" },
  { id: "airmail", name: "Airmail inbox", bg: "linear-gradient(#3f9ff2, #2b6fdc)", running: true, badge: "7468" },
  { id: "finalcut", name: "Final Cut Pro", bg: "none", bare: true },
  { id: "safari", name: "Safari", bg: "#f3f3f4", running: true },
  { id: "podcasts", name: "Podcasts", bg: "linear-gradient(#b962e8, #7c33b4)" },
  { id: "tr", name: "TR", bg: "#000" },
  { id: "feather", name: "Feather", bg: "none", bare: true },
  { id: "photos", name: "Photos", bg: "#fff", running: true },
  { id: "notes", name: "Notes", bg: "#f5f3ee", running: true },
  { id: "facetime", name: "FaceTime", bg: "linear-gradient(#83ec7c, #4fbf4a)", badge: "10" },
  { id: "calendar", name: "Calendar", bg: "#f7f7f7", running: true, badge: "17" },
  { id: "maps", name: "Maps", bg: "#e8f0e4" },
  { id: "calendar", name: "Calendar agenda", bg: "#f7f7f7", badge: "17" },
  { id: "ring", name: "Find My", bg: "none", bare: true },
  { id: "reminders", name: "Reminders", bg: "#fff", badge: "2" },
  { id: "tv", name: "TV", bg: "linear-gradient(#24322f, #10171a)" },
  { id: "appstore", name: "App Store", bg: "linear-gradient(#55b4f5, #2966dd)" },
  { id: "hex", name: "Hex", bg: "none", bare: true },
  { id: "freeform", name: "Freeform", bg: "#fff" },
  { id: "settings", name: "System Settings", bg: "linear-gradient(#d3dbe1, #85888a)", running: true, badge: "1" },
  { id: "toggle", name: "Switches", bg: "none", bare: true },
  { id: "music", name: "Music", bg: "linear-gradient(#ef6470, #e63c4b)" },
  { id: "feedback", name: "Feedback", bg: "linear-gradient(#bb68e8, #9347c4)" },
  { id: "messenger", name: "Messenger", bg: "#fff", fg: "#2a68f5" },
  { id: "phone", name: "iPhone Mirroring", bg: "#bfc1c0" },
  { id: "roblox", name: "Roblox", bg: "#3a55ee" },
  { id: "rule-apps" },
  { id: "acrobat", name: "Acrobat", bg: "#a32014", running: true },
  { id: "express", name: "Express", bg: "#cf4444", running: true },
  { id: "preview", name: "Preview", bg: "#fff", running: true },
  { id: "contacts", name: "Contacts", bg: "#b0894c", running: true },
  { id: "replit", name: "Replit", bg: "#151c2b", running: true },
  { id: "rule-trash" },
  { id: "trash", name: "Trash", bg: "none", bare: true },
];

/* ---------- data ---------- */

const menu = [
  ["Dashboard", House], ["Bookings", Inbox], ["Address Book", Users], ["Contracts", FileText],
  ["Invoices", DollarSign], ["Calendar", Calendar], ["Compliance", Shield], ["Settings", Settings],
  ["Templates", MessageSquare], ["User Guide", BookOpen],
];
const bookmarks = [
  ["Favourites", FolderIcon, 202], ["Bookmarks Menu", FolderIcon, 280], ["Reading List", FolderIcon, 224],
  ["untitled folder", FolderIcon, 246], ["Arnold Palmer Invi...", GolfIcon, 303], ["Sky Sports - Sport...", SkyIcon, 308],
  ["NewsNow: Spurs...", NewsIcon, 311], ["Imported", FolderIcon, 200],
];
const views = [["Day", Clock], ["Week", List], ["Month", Calendar], ["Year", Grid3x3]];
const weekdays = ["Mon", "Tue", "Wed", "Thu", "Fri", "Sat", "Sun"];
const gigs = {
  6: "Groovemeister + DJ", 7: "Groovemeister", 13: "Misc Gig with George", 19: "Solo - Booking at The Crate Bosham",
  20: "Solo + DJ - Harry Tamplin Wedding", 21: "Solo DJ & Saxophone Performance", 27: "Solo - Robin Jarman",
  30: "Solo wedding Johanna Ross", 33: "Solo - Sarah Nyman Wedding", 34: "Solo - Stephen West Wedding",
};
const weeks = [0, 1, 2, 3, 4].map((w) => weekdays.map((_, d) => {
  const index = w * 7 + d;
  const number = index === 0 ? 30 : index > 31 ? index - 31 : index;
  const gig = gigs[index];
  const tone = index === 16 ? "today" : gig ? "booked" : index === 0 || index > 31 ? "outside" : "plain";
  return { index, number, gig, tone };
}));

function Editor() {
  return (
    <EditorWindow>
      <EditorBar>
        <BarGroup>
          <Light $color="#5d5e62" /><Light $color="#5d5e62" /><Light $color="#5d5e62" />
          <HomeSlot><House size={32} /></HomeSlot>
          <AppGlyph><FileText size={24} /></AppGlyph>
          ProductTrackerPro
        </BarGroup>
        <RunPill>
          <svg width="32" height="32" viewBox="0 0 32 32" fill="currentColor"><circle cx="5" cy="5" r="5" /><circle cx="15" cy="5" r="5" /><circle cx="26" cy="5" r="5" /><circle cx="9" cy="16" r="5" /><circle cx="20" cy="16" r="5" /></svg>
          <span>Running</span>
        </RunPill>
        <BarActions>
          <SearchSlot><Search size={32} /></SearchSlot>
          <BarButton><UserPlus size={32} />Invite</BarButton>
          <SplitButton>
            <BarButton><LiveGlobe><Globe size={34} /></LiveGlobe>Redeploy</BarButton>
            <BarButton aria-label="Deployment panel"><Copy size={30} /></BarButton>
          </SplitButton>
          <RoundAvatar>TT</RoundAvatar>
          <ChevronDown size={20} />
        </BarActions>
      </EditorBar>
      <EditorBody>
        <ToolPanel $width={384} $pad={10}><ToolSlot /><ToolSlot /></ToolPanel>
        <ToolPanel $width={692} $pad={16}><ToolSlot /></ToolPanel>
        <WebPane>
          <WebTabs />
          <WebBar><ExternalLink size={32} /></WebBar>
          <WebPage>
            <WebCards>
              <WebAction />
              <WebGap />
              <WebCard><WebPrice>Price TBC</WebPrice><WebWeekday>SUN</WebWeekday></WebCard>
              <WebCard><WebPrice>Price TBC</WebPrice><WebWeekday>SUN</WebWeekday></WebCard>
            </WebCards>
            <WebThumb />
          </WebPage>
        </WebPane>
      </EditorBody>
    </EditorWindow>
  );
}

function BrowserChrome() {
  return (
    <>
      <TabStrip>
        <Lights><Light $color="#ec6a5e" /><Light $color="#f4be4f" /><Light $color="#61c554" /></Lights>
        <Tab>
          <CalendarFavicon />
          <TabText>Google Calendar - July 2025</TabText>
          <TabClose aria-label="Close tab"><X size={24} strokeWidth={3} /></TabClose>
        </Tab>
        <Tab $active>
          <WorldFavicon />
          <TabText $fade>MusoBuddy - Music Business</TabText>
          <TabClose aria-label="Close tab"><X size={24} strokeWidth={3} /></TabClose>
        </Tab>
        <NewTab aria-label="New tab"><Plus size={28} strokeWidth={3} /></NewTab>
        <TabSearch aria-label="Search tabs"><ChevronDown size={26} strokeWidth={3} /></TabSearch>
      </TabStrip>
      <Toolbar>
        <NavButton aria-label="Back"><ArrowLeft size={34} /></NavButton>
        <NavButton aria-label="Forward" $off><ArrowRight size={34} /></NavButton>
        <NavButton aria-label="Reload"><Reload /></NavButton>
        <Omnibox>
          <SiteInfo><Tune /></SiteInfo>
          <Address aria-label="Address" readOnly value="f19aba74-886b-4308-a2de-cc9ba5e94af8-00-2ux7uy3ch9t9f.janeway.replit.dev/calendar" />
          <Star />
        </Omnibox>
        <Extensions>
          <PasswordIcon />
          <Puzzle />
          <Rule />
          <Profile><ProfilePicture />Work</Profile>
          <Dots />
        </Extensions>
      </Toolbar>
      <Bookmarks>
        <AppsButton aria-label="Apps"><Apps /></AppsButton>
        <BookmarkRule />
        {bookmarks.map(([label, Icon, width]) => (
          <Bookmark key={label} href="#" $width={width}><Icon />{label}</Bookmark>
        ))}
      </Bookmarks>
    </>
  );
}

function AppSidebar() {
  return (
    <Sidebar>
      <Brand>
        <BrandMark><BrandLogo /></BrandMark>
        <BrandText>
          <BrandName>MusoBuddy</BrandName>
          <BrandTag>Less admin, more music</BrandTag>
        </BrandText>
      </Brand>
      <Menu>
        {menu.map(([label, Icon]) => (
          <MenuItem key={label} href="#" $active={label === "Calendar"}><Icon size={42} />{label}</MenuItem>
        ))}
      </Menu>
      <Account>
        <Avatar><User size={42} /></Avatar>
        <div>
          <AccountName>Tim</AccountName>
          <AccountRole>Musician</AccountRole>
        </div>
        <Logout><LogOut size={34} />Logout</Logout>
      </Account>
    </Sidebar>
  );
}

function CalendarPage() {
  return (
    <Main>
      <PageHeader>
        <PageTitle>Calendar</PageTitle>
        <Actions $gap={24}>
          <Actions $gap={16}>
            <Outline><Upload size={34} />Import Calendar</Outline>
            <Outline $tint><Download size={34} />Export Calendar</Outline>
          </Actions>
          <Switcher>
            {views.map(([label, Icon]) => (
              <View key={label} $active={label === "Month"}><Icon size={34} />{label}</View>
            ))}
          </Switcher>
          <Actions $gap={14}>
            <Outline $tint aria-label="Previous"><ChevronLeft size={34} /></Outline>
            <Today>Today</Today>
            <Outline $tint aria-label="Next"><ChevronRight size={34} /></Outline>
          </Actions>
        </Actions>
      </PageHeader>
      <Card>
        <MonthTitle>July 2025</MonthTitle>
        <Sheet>
          <Month>
            <thead>
              <tr>{weekdays.map((d) => <th key={d}><Weekday>{d}</Weekday></th>)}</tr>
            </thead>
            <tbody>
              {weeks.map((week) => (
                <tr key={week[0].index}>
                  {week.map(({ index, number, gig, tone }) => (
                    <td key={index}>
                      <Day $tone={tone}>
                        <DayNumber>{number}</DayNumber>
                        {gig && <Gig>{gig}</Gig>}
                      </Day>
                    </td>
                  ))}
                </tr>
              ))}
            </tbody>
          </Month>
        </Sheet>
      </Card>
    </Main>
  );
}

export default function App() {
  return (
    <Desktop>
      <GlobalStyle />
      <Editor />
      <BrowserWindow>
        <BrowserChrome />
        <Page>
          <AppSidebar />
          <CalendarPage />
          <ScrollTrack><ScrollThumb /></ScrollTrack>
          <ChatButton aria-label="Open chat"><MessageCircle size={36} /></ChatButton>
        </Page>
      </BrowserWindow>
      <Dock>
        {dockApps.map((app) => app.name ? (
          <DockItem key={app.name} aria-label={app.name} $running={app.running}>
            <Tile $bg={app.bg} $fg={app.fg} $bare={app.bare}>{art[app.id]}</Tile>
            {app.badge && <Badge>{app.badge}</Badge>}
          </DockItem>
        ) : <DockRule key={app.id} />)}
      </Dock>
    </Desktop>
  );
}
